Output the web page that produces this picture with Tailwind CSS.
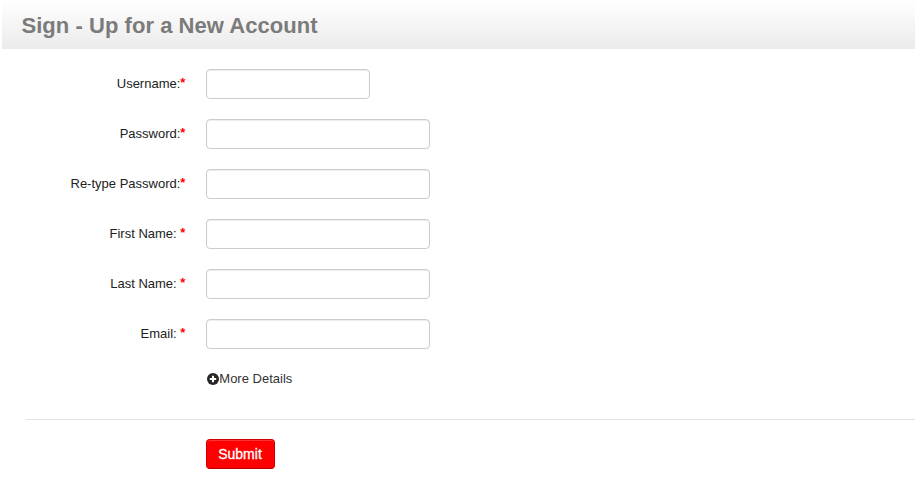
<!DOCTYPE html>
<html lang="en"><head><meta charset="utf-8"><title>Sign Up</title>
<script src="https://cdn.jsdelivr.net/npm/@tailwindcss/browser@4"></script></head>
<body class="bg-white font-['Liberation_Sans',Arial,sans-serif] text-[13px] leading-5 text-[#222] overflow-hidden">
<header class="ml-0.5 h-[49px] pl-[19.5px] pt-[11px] bg-linear-to-b from-white to-[#ebebeb]"><h1 class="text-[22px] leading-[30px] font-bold text-[#7b7b7b] tracking-[0.04px] whitespace-nowrap">Sign - Up for a New Account</h1></header>
<form>
<div class="pt-5 flex flex-col gap-5">
<div class="flex h-[30px]"><label class="w-[185.4px] mr-[20.6px] pt-[5px] text-right">Username:<span class="text-[#f00] font-bold relative -top-px">*</span></label><input class="w-[164px] h-[30px] rounded border border-[#ccc] shadow-[inset_0_1px_1px_rgba(0,0,0,0.075)]"></div>
<div class="flex h-[30px]"><label class="w-[185.4px] mr-[20.6px] pt-[5px] text-right">Password:<span class="text-[#f00] font-bold relative -top-px">*</span></label><input class="w-[224px] h-[30px] rounded border border-[#ccc] shadow-[inset_0_1px_1px_rgba(0,0,0,0.075)]"></div>
<div class="flex h-[30px]"><label class="w-[185.4px] mr-[20.6px] pt-[5px] text-right">Re-type Password:<span class="text-[#f00] font-bold relative -top-px">*</span></label><input class="w-[224px] h-[30px] rounded border border-[#ccc] shadow-[inset_0_1px_1px_rgba(0,0,0,0.075)]"></div>
<div class="flex h-[30px]"><label class="w-[185.4px] mr-[20.6px] pt-[5px] text-right">First Name: <span class="text-[#f00] font-bold relative -top-px">*</span></label><input class="w-[224px] h-[30px] rounded border border-[#ccc] shadow-[inset_0_1px_1px_rgba(0,0,0,0.075)]"></div>
<div class="flex h-[30px]"><label class="w-[185.4px] mr-[20.6px] pt-[5px] text-right">Last Name: <span class="text-[#f00] font-bold relative -top-px">*</span></label><input class="w-[224px] h-[30px] rounded border border-[#ccc] shadow-[inset_0_1px_1px_rgba(0,0,0,0.075)]"></div>
<div class="flex h-[30px]"><label class="w-[185.4px] mr-[20.6px] pt-[5px] text-right">Email: <span class="text-[#f00] font-bold relative -top-px">*</span></label><input class="w-[224px] h-[30px] rounded border border-[#ccc] shadow-[inset_0_1px_1px_rgba(0,0,0,0.075)]"></div>
</div>
<a class="mt-5 ml-[207px] h-5 flex items-center text-[#333]"><svg class="w-3 h-3 mr-[0.3px]" viewBox="0 0 12 12"><circle cx="6" cy="6" r="6" fill="#262626"/><path d="M6 2.8v6.4M2.8 6h6.4" stroke="#fff" stroke-width="2.1"/></svg>More Details</a>
<div class="mt-[30px] ml-[26px] border-t border-[#e3e3e3] pt-[19px] pl-[180px]"><button type="button" class="block w-[69px] h-[30px] rounded border border-[#d00000] border-b-[#b30000] bg-[#f00] pr-px text-white text-[14px] leading-5 shadow-[inset_0_1px_0_rgba(255,255,255,0.2)] [-webkit-text-stroke:0.3px_white]">Submit</button></div>
</form></body></html>
